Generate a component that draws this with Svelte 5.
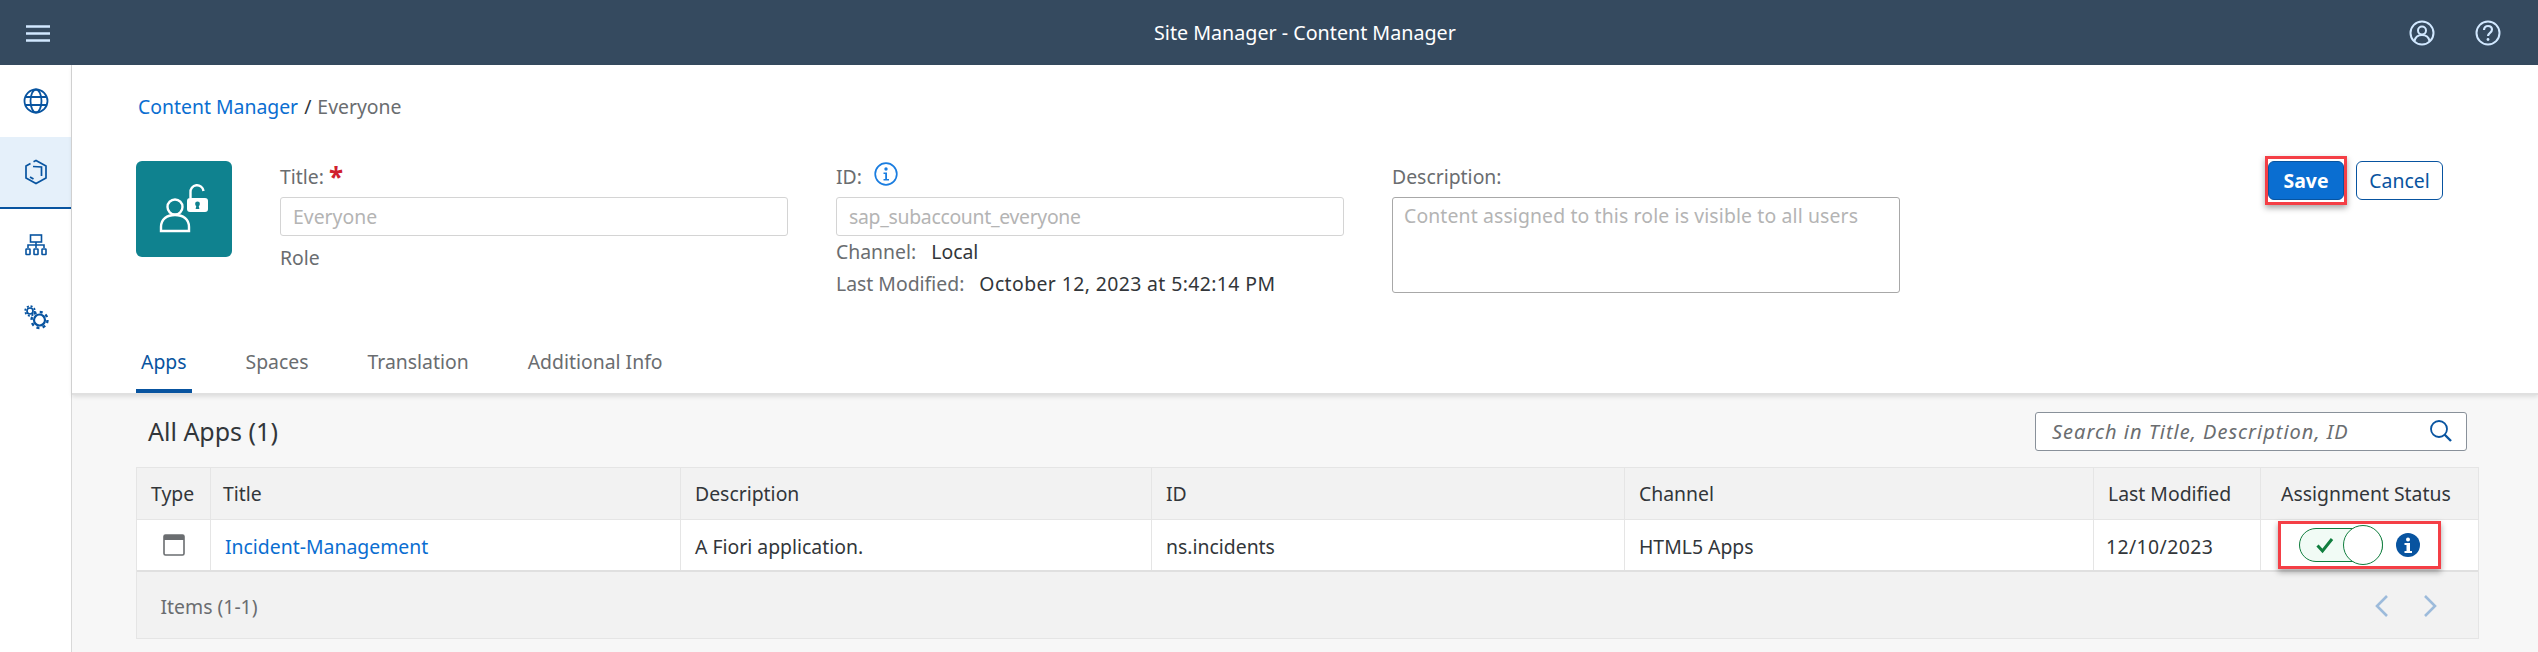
<script>
  const heads = ['Type','Title','Description','ID','Channel','Last Modified','Assignment Status'];
</script>

<div class="page">
  <header class="shell">
    <svg class="ico" width="24" height="24" viewBox="0 0 24 24"><path d="M0 5.500h24M0 12.500h24M0 19.500h24" stroke="#d1e8ff" stroke-width="2.600"/></svg>
    <div class="shell-title">Site Manager - Content Manager</div>
    <div class="shell-right">
      <svg width="26" height="26" viewBox="0 0 26 26" fill="none" stroke="#d1e8ff" stroke-width="2"><circle cx="13" cy="13" r="11.500"/><circle cx="13" cy="10.500" r="4"/><path d="M5.500 21c.8-4 3.600-6 7.500-6s6.700 2 7.500 6"/></svg>
      <svg width="26" height="26" viewBox="0 0 26 26" fill="none" stroke="#d1e8ff" stroke-width="2"><circle cx="13" cy="13" r="11.500"/><path d="M9 10c0-2.600 1.800-4 4-4s4 1.400 4 3.600c0 3.400-4 3-4 6.400" stroke-width="2.200"/><circle cx="13" cy="19.500" r="1.400" fill="#d1e8ff" stroke="none"/></svg>
    </div>
  </header>

  <div class="body">
    <nav class="side">
      <div class="nav-item">
        <svg width="26" height="26" viewBox="0 0 26 26" fill="none" stroke="#0854a0" stroke-width="1.800"><circle cx="13" cy="13" r="11.500"/><ellipse cx="13" cy="13" rx="5.500" ry="11.500"/><path d="M2.500 9h21M2.500 17h21"/></svg>
      </div>
      <div class="nav-item sel">
        <svg width="24" height="26" viewBox="0 0 24 26" fill="none" stroke="#0854a0" stroke-width="1.700"><path d="M9.500 2.800 12 1.500l10 5.600v11.800L12 24.500 2 18.900V7.100L6.500 4.500"/><path d="M9 7.500l8.500 .5v9"/><path d="M6 18l3.500 2"/></svg>
      </div>
      <div class="nav-item">
        <svg width="22" height="22" viewBox="0 0 22 22" fill="none" stroke="#0854a0" stroke-width="1.600"><rect x="5.500" y="1" width="11" height="7"/><path d="M11 8v6M3 14v-3h16v3"/><rect x="1" y="15" width="4" height="5.500" rx=".5"/><rect x="9" y="15" width="4" height="5.500" rx=".5"/><rect x="17" y="15" width="4" height="5.500" rx=".5"/></svg>
      </div>
      <div class="nav-item">
        <svg width="26" height="26" viewBox="0 0 26 26" fill="none" stroke="#0854a0"><circle cx="7" cy="7" r="3" stroke-width="1.700"/><circle cx="7" cy="7" r="4.800" stroke-width="1.800" stroke-dasharray="2 1.770"/><circle cx="16.500" cy="16" r="5.500" stroke-width="2.200"/><circle cx="16.500" cy="16" r="8" stroke-width="2.400" stroke-dasharray="3 3.280"/></svg>
      </div>
    </nav>

    <main class="main">
      <section class="top">
        <div class="crumbs"><span class="link">Content Manager</span><span class="sep">/</span><span class="lab">Everyone</span></div>
        <div class="head">
          <div class="avatar">
            <svg width="96" height="96" viewBox="0 0 96 96" fill="none" stroke="#fff" stroke-width="2.400"><circle cx="39" cy="46" r="7.500"/><path d="M25 70v-4c0-8 6-12 14-12s14 4 14 12v4z"/><path d="M54.500 37v-5.500a6.500 6.500 0 0 1 13-1.500"/><rect x="51" y="37" width="21" height="14" rx="3" fill="#fff" stroke="none"/><circle cx="61.500" cy="43" r="2.400" fill="#0f828f" stroke="none"/><path d="M60.500 44h2l.9 4h-3.800z" fill="#0f828f" stroke="none"/></svg>
          </div>
          <div class="field">
            <div class="lab row"><span>Title:</span><span class="star">*</span></div>
            <div class="input">Everyone</div>
            <div class="lab role">Role</div>
          </div>
          <div class="field">
            <div class="lab row"><span>ID:</span>
              <svg class="info" width="24" height="24" viewBox="0 0 24 24" fill="none"><circle cx="12" cy="12" r="10.800" stroke="#1a7de0" stroke-width="1.700"/><circle cx="12" cy="7" r="1.700" fill="#1a7de0"/><path d="M9.500 10.500h3.500v6.500h2v1.500H9.500V17h1.700v-5H9.500z" fill="#1a7de0"/></svg>
            </div>
            <div class="input idv">sap_subaccount_everyone</div>
            <div class="meta m1"><span class="lab">Channel:</span><span>Local</span></div>
            <div class="meta m2"><span class="lab">Last Modified:</span><span class="num">October 12, 2023 at 5:42:14 PM</span></div>
          </div>
          <div class="field">
            <div class="lab row"><span>Description:</span></div>
            <div class="input area">Content assigned to this role is visible to all users</div>
          </div>
          <div class="actions">
            <div class="mark-save"><button class="btn save">Save</button></div>
            <button class="btn cancel">Cancel</button>
          </div>
        </div>
        <div class="tabs">
          <div class="tab on">Apps</div>
          <div class="tab">Spaces</div>
          <div class="tab">Translation</div>
          <div class="tab">Additional Info</div>
        </div>
      </section>

      <section class="list">
        <div class="toolbar">
          <h2>All Apps (1)</h2>
          <div class="search">
            <span>Search in Title, Description, ID</span>
            <svg width="24" height="24" viewBox="0 0 24 24" fill="none" stroke="#0854a0"><circle cx="10" cy="10" r="8" stroke-width="1.800"/><path d="M15.500 15.500 22 22" stroke-width="2.400"/></svg>
          </div>
        </div>
        <div class="table">
          <div class="tr thead">
            {#each heads as h}<div class="cell">{h}</div>{/each}
          </div>
          <div class="tr tbody">
            <div class="cell center">
              <svg width="22" height="22" viewBox="0 0 22 22" fill="none"><rect x="1" y="1" width="20" height="20" rx="1.500" stroke="#6a6d70" stroke-width="1.600"/><rect x="1" y="1" width="20" height="5" fill="#6a6d70"/></svg>
            </div>
            <div class="cell"><span class="link">Incident-Management</span></div>
            <div class="cell">A Fiori application.</div>
            <div class="cell">ns.incidents</div>
            <div class="cell">HTML5 Apps</div>
            <div class="cell"><span class="num date">12/10/2023</span></div>
            <div class="cell status">
              <div class="toggle">
                <svg width="20" height="18" viewBox="0 0 20 18" fill="none"><path d="M2.500 9.500 7.500 15 17 3" stroke="#107e3e" stroke-width="3"/></svg>
                <div class="knob"></div>
              </div>
              <svg width="24" height="24" viewBox="0 0 24 24"><circle cx="12" cy="12" r="12" fill="#0854a0"/><circle cx="12" cy="6.500" r="2" fill="#fff"/><path d="M8.500 10h5.500v8h2v2H8.500v-2h2v-6h-2z" fill="#fff"/></svg>
              <div class="mark"></div>
            </div>
          </div>
          <div class="tfoot">
            <span class="lab">Items (1-1)</span>
            <div class="pager">
              <svg width="14" height="24" viewBox="0 0 14 24" fill="none" stroke="#9dbbdb" stroke-width="2.600"><path d="M12 2 2 12l10 10"/></svg>
              <svg width="14" height="24" viewBox="0 0 14 24" fill="none" stroke="#9dbbdb" stroke-width="2.600"><path d="M2 2l10 10L2 22"/></svg>
            </div>
          </div>
        </div>
      </section>
    </main>
  </div>
</div>

<style>
  :global(body) { margin: 0; background: #fff; }
  .page { width: 2538px; height: 652px; overflow: hidden; font-family: "Noto Sans", "Open Sans", sans-serif; font-size: 19.400px; color: #32363a; display: flex; flex-direction: column; }
  .shell { height: 65px; flex: none; background: #354a5f; display: flex; align-items: center; padding: 0 37px 0 26px; }
  .shell-title { color: #fff; margin-left: 1104px; font-size: 19.700px; }
  .shell-right { display: flex; gap: 40px; margin-left: auto; }
  .ico { display: block; }
  .body { flex: 1; display: flex; min-height: 0; }
  .side { width: 71px; flex: none; border-right: 1.500px solid #d9d9d9; display: flex; flex-direction: column; }
  .nav-item { height: 72px; display: flex; align-items: center; justify-content: center; }
  .sel { background: #e5f0fa; border-bottom: 2px solid #0854a0; box-sizing: border-box; }
  .main { flex: 1; display: flex; flex-direction: column; min-width: 0; }
  .top { height: 330px; flex: none; box-sizing: border-box; position: relative; z-index: 1; background: #fff; box-shadow: 0 2px 4px rgba(0,0,0,.1); border-bottom: 2px solid #e0e0e0; display: flex; flex-direction: column; }
  .crumbs { padding: 28px 0 0 66px; height: 56px; box-sizing: border-box; display: flex; gap: 6px; line-height: 28px; }
  .link { color: #0a6ed1; }
  .lab { color: #6a6d70; }
  .head { margin-top: 40px; padding: 0 95px 0 64px; display: flex; gap: 48px; height: 133px; }
  .avatar { width: 96px; height: 96px; border-radius: 6px; background: #0f828f; flex: none; }
  .avatar svg { display: block; }
  .field { width: 508px; flex: none; }
  .row { display: flex; align-items: center; height: 32px; gap: 5px; line-height: 32px; }
  .star { color: #d0202e; font-size: 26px; font-weight: 700; line-height: 24px; position: relative; }
  .info { margin: -6px 0 0 7px; }
  .input { margin-top: 4px; height: 39px; box-sizing: border-box; border: 1.500px solid #d4d4d4; border-radius: 3px; padding: 0 12px; line-height: 37px; color: #b4b4b4; }
  .idv { letter-spacing: -.3px; }
  .area { height: 96px; border-color: #a8a8a8; line-height: 36px; padding: 0 11px; letter-spacing: .13px; }
  .role { margin-top: 9px; line-height: 26px; }
  .meta { display: flex; gap: 15px; line-height: 26px; }
  .m1 { margin-top: 3px; }
  .m2 { margin-top: 6px; }
  .num { letter-spacing: .4px; }
  .date { margin-left: -2px; }
  .actions { margin-left: auto; display: flex; align-items: flex-start; gap: 9px; }
  .mark-save { border: 3px solid #f43f46; padding: 2px 0; margin-top: -5px; box-shadow: 0 3px 6px rgba(0,0,0,.35); }
  .btn { display: block; height: 39px; border-radius: 6px; font: inherit; padding: 0; box-sizing: border-box; }
  .save { width: 76px; background: #0a6ed1; color: #fff; border: 1px solid #0854a0; font-weight: 700; }
  .cancel { width: 87px; background: #fff; color: #0854a0; border: 1.500px solid #0854a0; }
  .tabs { margin-top: auto; display: flex; gap: 49px; padding-left: 64px; height: 63px; }
  .tab { padding: 0 5px; color: #6a6d70; line-height: 64px; height: 63px; box-sizing: border-box; }
  .on { color: #0854a0; border-bottom: 4px solid #0854a0; }
  .list { flex: 1; background: #f7f7f7; padding: 0 59px 0 64px; }
  .toolbar { height: 72px; display: flex; align-items: center; justify-content: space-between; padding: 0 12px 0 12px; }
  h2 { margin: 0; font-size: 25px; font-weight: 400; }
  .search { width: 432px; height: 39px; box-sizing: border-box; border: 1.500px solid #89919a; border-radius: 3px; background: #fff; display: flex; align-items: center; justify-content: space-between; padding: 0 13px 0 16px; font-style: italic; color: #6a6d70; font-size: 20px; letter-spacing: 1px; }
  .table { border: 1.500px solid #e5e5e5; background: #fff; }
  .tr { display: grid; grid-template-columns: 74px 470px 471px 473px 469px 167px 1fr; }
  .thead { height: 52px; background: #f2f2f2; border-bottom: 1.500px solid #e5e5e5; box-sizing: border-box; }
  .tbody { height: 52px; border-bottom: 2.500px solid #e0e0e0; box-sizing: border-box; }
  .tbody .cell { padding-top: 2px; box-sizing: border-box; }
  .cell { display: flex; align-items: center; padding-left: 14px; border-right: 1.500px solid #e5e5e5; min-width: 0; white-space: nowrap; }
  .thead .cell:nth-child(2) { padding-left: 12px; }
  .thead .cell:last-child { padding-left: 20px; }
  .cell:last-child { border-right: 0; }
  .tbody .center { justify-content: center; padding: 0; }
  .tbody .status { position: relative; padding-left: 38px; padding-top: 0; gap: 13px; }
  .toggle { width: 84px; height: 34px; box-sizing: border-box; border: 1.500px solid #107e3e; border-radius: 17px; background: #f1fbf5; position: relative; display: flex; align-items: center; padding-left: 15px; }
  .knob { position: absolute; right: -1px; top: -4px; width: 38px; height: 38px; border-radius: 50%; background: #fff; border: 1.500px solid #107e3e; }
  .mark { position: absolute; left: 17px; top: 1px; width: 163px; height: 48px; box-sizing: border-box; border: 3px solid #f43f46; box-shadow: 0 3px 6px rgba(0,0,0,.35); pointer-events: none; }
  .tfoot { height: 66px; padding: 2px 41px 0 23.500px; box-sizing: border-box; background: #f2f2f2; display: flex; align-items: center; justify-content: space-between; }
  .pager { display: flex; gap: 34px; }
</style>
